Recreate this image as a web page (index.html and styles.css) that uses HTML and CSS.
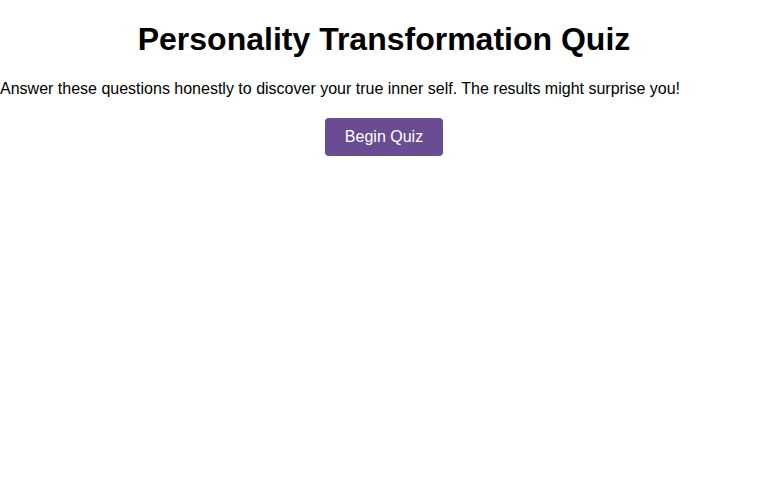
FILE: index.html
```html
<!DOCTYPE html>
<html>
<head>
<meta charset="utf-8">
<link rel="stylesheet" href="styles.css">
</head>
<body>
<div class="quiz">
  <h1 class="title">Personality Transformation Quiz</h1>
  <p class="intro">Answer these questions honestly to discover your true inner self. The results might surprise you!</p>
  <div class="actions">
    <button class="start-btn">Begin Quiz</button>
  </div>
</div>
</body>
</html>
```

FILE: styles.css
```css
html, body {
  margin: 0;
  padding: 0;
  background: #ffffff;
}
body {
  font-family: "Liberation Sans", Arial, sans-serif;
  color: #000000;
}
.title {
  font-size: 32px;
  font-weight: bold;
  text-align: center;
  margin: 21px 0 22px;
}
.intro {
  font-size: 16px;
  margin: 0 0 16px;
  line-height: 18px;
}
.actions {
  display: flex;
  justify-content: center;
  padding-top: 4px;
}
.start-btn {
  font-family: "Liberation Sans", Arial, sans-serif;
  font-size: 16px;
  color: #ffffff;
  background: #6a4c93;
  border: none;
  border-radius: 4px;
  padding: 10px 20px;
  line-height: 18px;
  cursor: pointer;
}
```
